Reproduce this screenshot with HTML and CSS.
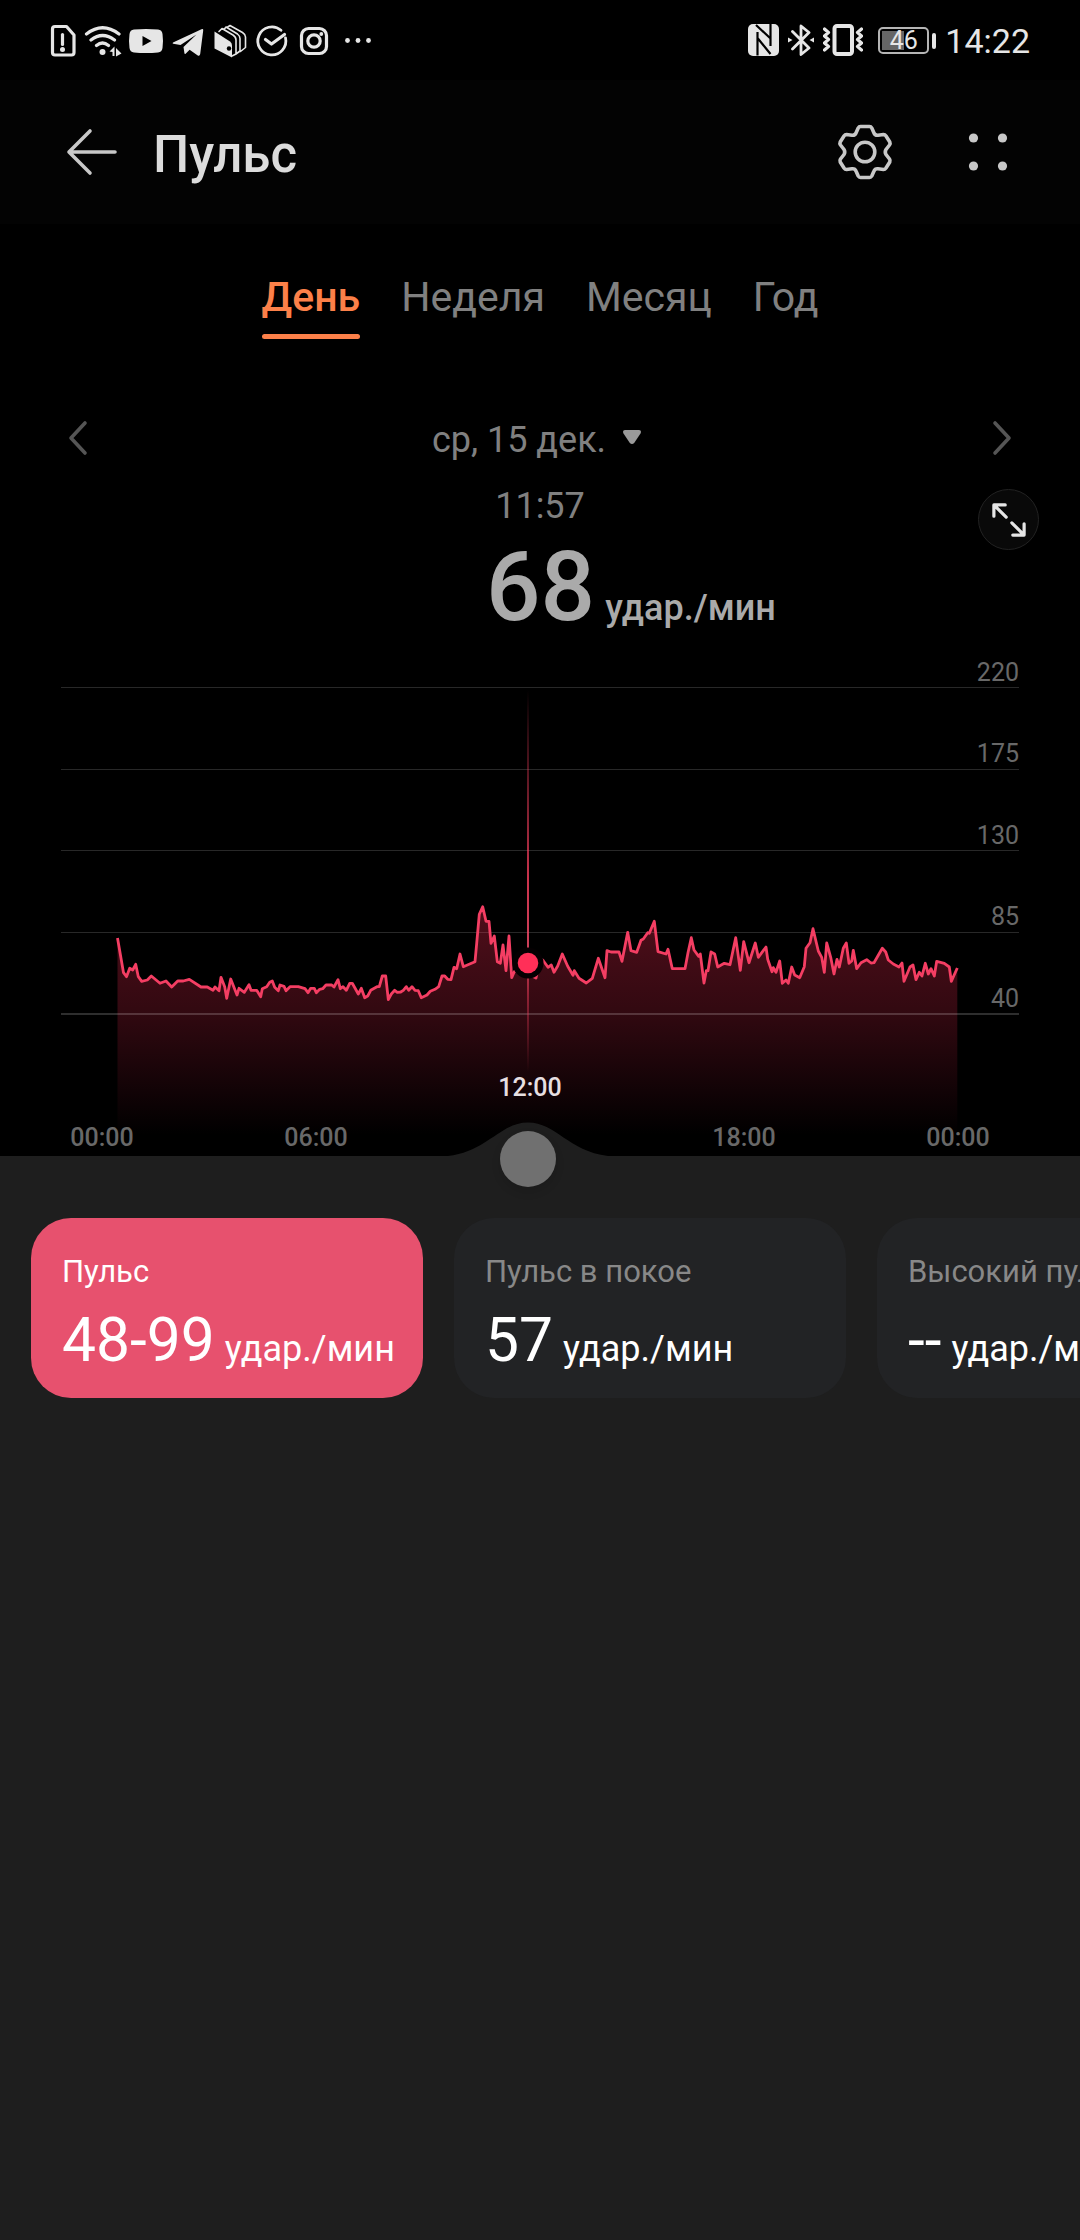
FILE: index.html
```
<!DOCTYPE html>
<html lang="ru">
<head>
    <meta charset="UTF-8">
    <meta name="viewport" content="width=device-width, initial-scale=1.0">
    <title>Пульс</title>
    <link rel="stylesheet" href="styles.css">
</head>
<body>
    <div class="status-bar">
        <div class="status-left">
            <svg viewBox="0 0 42 36" width="42" height="36">
                <path class="line" d="M13 4.5h11.5l7.5 8.500v17.500q0 2.500-2.500 2.500h-16.500q-2.500 0-2.500-2.500v-23.500q0-2.500 2.500-2.500z"/>
                <path class="line" d="M20.500 12.500v10"/>
                <circle cx="20.500" cy="27.500" r="2.500"/>
            </svg>
            <svg viewBox="0 0 42 36" width="42" height="36">
                <path class="line" d="M2.500 12q16-12.500 32.500 0M7 18q11.500-9 23.500 0M12.500 23.500q6-5 12 0"/>
                <circle cx="18.500" cy="30" r="3"/>
                <path d="M25.500 29.500l5-5v9.500h-2v-4zM32 26l5.500 5.500-5.500 3z"/>
            </svg>
            <svg viewBox="0 0 42 36" width="42" height="36">
                <path d="M8 7.500q12-1 24 0 4 .3 4.500 4.500 1 7 0 14-.5 4.200-4.500 4.500-12 1-24 0-4-.3-4.500-4.500-1-7 0-14 .5-4.200 4.500-4.500z"/>
                <path class="cut" d="M16.500 14l9 5-9 5z"/>
            </svg>
            <svg viewBox="0 0 42 36" width="42" height="36">
                <path d="M5 20.500L33.500 7.200q2-.7 1.700 1.300l-3 23.500q-.5 2.800-2.800 1.300l-7.800-5.500-4 4q-1 .9-1.200-.8l-.9-6 13-12.500-16 10.500-7.300-1.300q-1.200-.4-.2-1.200z"/>
            </svg>
            <svg viewBox="0 0 42 36" width="42" height="36">
                <path d="M4.500 9.500L20 19.500q2 1.500 2 4v12l-17.500-9z"/>
                <path class="thin" d="M9 9.500l3-3 11 6.500q3 2 3 5v14l-4 2M14 7.500l2-2.500 11.500 7q2.500 2 2.500 4.500v12.500l-4 3M17 5.500l3-2 12.500 7q3 2 3 4.500v10.500l-5 4"/>
                <circle class="cut" cx="19" cy="26.500" r="2.200"/>
            </svg>
            <svg viewBox="0 0 42 36" width="42" height="36">
                <path class="line2" d="M29 8.300a14 14 0 1 0 4.500 7.500"/>
                <path class="line" d="M13.500 17.500l6 4.500 13-9.500"/>
            </svg>
            <svg viewBox="0 0 42 36" width="42" height="36">
                <rect class="line" x="7.500" y="6.500" width="25" height="25" rx="7"/>
                <circle class="line" cx="20" cy="19" r="6.200"/>
                <circle cx="27.300" cy="12" r="1.900"/>
            </svg>
            <svg viewBox="0 0 42 36" width="42" height="36">
                <circle cx="11.500" cy="18.500" r="2.400"/>
                <circle cx="22" cy="18.500" r="2.400"/>
                <circle cx="32.500" cy="18.500" r="2.400"/>
            </svg>
        </div>
        <div class="status-right">
            <svg viewBox="0 0 31 32" width="31" height="32">
                <rect width="31" height="32" rx="5"/>
                <path class="nfc" d="M8 1l14 13M22.500 0v22M9.500 8v23.500M9.500 14l13 16"/>
            </svg>
            <svg viewBox="0 0 26 32" width="26" height="32">
                <path class="line2" d="M4.500 7.500L21 24l-8 6.500V2l8 6.500L4.500 25"/>
                <path d="M0 13.500l4.500 2.500L0 18.500zM26 13.500L21.500 16l4.500 2.500z"/>
            </svg>
            <svg viewBox="0 0 40 32" width="40" height="32">
                <rect class="line4" x="11.500" y="2" width="17.500" height="28" rx="2.500"/>
                <path class="line" d="M1.500 5l4 3.500-4 3.500 4 3.500-4 3.500 4 3.500-4 3.500M38.500 5l-4 3.500 4 3.500-4 3.500 4 3.500-4 3.500 4 3.500"/>
            </svg>
            <div class="battery"><span>46</span></div>
            <div class="clock">14:22</div>
        </div>
    </div>

    <div class="header">
        <svg class="back" viewBox="0 0 52 48" width="52" height="48">
            <path d="M24 3L3 24l21 21M3 24h46"/>
        </svg>
        <h1>Пульс</h1>
        <svg class="gear" viewBox="-28 -28 56 56" width="56" height="56">
            <path d="M-4.500 -25.500H4.500Q6 -25.500 6.800 -24L9 -19Q10 -16.500 13 -16.800L18.500 -17.500Q20 -17.500 21 -16L24.800 -10Q25.500 -8.500 24.500 -7L21 -2.500Q19.500 0 21 2.500L24.500 7Q25.500 8.500 24.800 10L21 16Q20 17.500 18.500 17.500L13 16.800Q10 16.500 9 19L6.800 24Q6 25.500 4.500 25.500H-4.500Q-6 25.500 -6.800 24L-9 19Q-10 16.500 -13 16.800L-18.500 17.500Q-20 17.500 -21 16L-24.800 10Q-25.500 8.500 -24.500 7L-21 2.500Q-19.500 0 -21 -2.500L-24.500 -7Q-25.500 -8.500 -24.800 -10L-21 -16Q-20 -17.500 -18.500 -17.500L-13 -16.800Q-10 -16.500 -9 -19L-6.800 -24Q-6 -25.500 -4.500 -25.500Z"/>
            <circle r="9.800"/>
        </svg>
        <svg class="more" viewBox="0 0 40 40" width="40" height="40">
            <circle cx="5.500" cy="6" r="4.600"/>
            <circle cx="34.500" cy="6" r="4.600"/>
            <circle cx="5.500" cy="34" r="4.600"/>
            <circle cx="34.500" cy="34" r="4.600"/>
        </svg>
    </div>

    <div class="tabs">
        <div class="tab active">День</div>
        <div class="tab">Неделя</div>
        <div class="tab">Месяц</div>
        <div class="tab">Год</div>
    </div>

    <div class="date-row">
        <svg class="chevron" viewBox="0 0 20 36" width="20" height="36"><path d="M17 3L3 18l14 15"/></svg>
        <div class="date">
            <span>ср, 15 дек.</span>
            <svg viewBox="0 0 20 16" width="20" height="16"><path d="M3 1h14q3 .5 1.500 3.500l-6 9q-2.500 3-5 0l-6-9q-1.500-3 1.500-3.500z"/></svg>
        </div>
        <svg class="chevron" viewBox="0 0 20 36" width="20" height="36"><path d="M3 3l14 15L3 33"/></svg>
    </div>

    <div class="reading">
        <div class="time">11:57</div>
        <div class="bpm"><span class="number">68</span><span class="unit">удар./мин</span></div>
        <div class="expand">
            <svg viewBox="0 0 36 36" width="34" height="34">
                <path d="M2 14V2h12M2.500 2.500L15 15M34 22v12H22M21 21l12.500 12.500"/>
            </svg>
        </div>
    </div>

    <div class="chart">
        <svg viewBox="0 656 1080 500" width="1080" height="500">
            <defs>
                <linearGradient id="fill" gradientUnits="userSpaceOnUse" x1="0" y1="905" x2="0" y2="1135">
                    <stop offset="0" stop-color="#ff2d55" stop-opacity="0.320"/>
                    <stop offset="0.450" stop-color="#ff2d55" stop-opacity="0.200"/>
                    <stop offset="1" stop-color="#ff2d55" stop-opacity="0"/>
                </linearGradient>
                <linearGradient id="cursor" gradientUnits="userSpaceOnUse" x1="0" y1="690" x2="0" y2="1072">
                    <stop offset="0" stop-color="#ff4060" stop-opacity="0"/>
                    <stop offset="0.500" stop-color="#ff4060" stop-opacity="0.800"/>
                    <stop offset="0.680" stop-color="#ff5070" stop-opacity="0.800"/>
                    <stop offset="0.800" stop-color="#ff4060" stop-opacity="0.450"/>
                    <stop offset="1" stop-color="#ff4060" stop-opacity="0"/>
                </linearGradient>
            </defs>
            <path class="grid" d="M61 687.500H1019M61 769.500H1019M61 850.500H1019M61 932.500H1019"/>
            <polygon id="area" fill="url(#fill)"/>
            <path class="grid base" d="M61 1014H1019"/>
            <polyline id="pulse" class="pulse" points="117.5,938 123.5,972.7 126.5,976.7 129.7,968.3 132.7,970 135.7,964.3 138.3,976.7 141.7,981.3 147.3,980 151.3,976 160,983.3 166,981 171.7,987 177.7,981 183.3,981 189.3,979.3 201,987 207.3,987 213,990.3 215,987 219,990.7 221,977.3 224.7,986.7 226.7,998.3 230.7,979 237,995 239,988.3 244.3,992.3 249,984.7 251,990.3 256.7,990.3 260.7,996.7 262.3,988.7 266.7,986.7 269.7,982.3 272.3,981 274.7,987.3 278.3,990.7 280,985 284,986.3 286,990.7 290,986.7 298.3,986.7 305,988.7 308,992.7 310.7,988.3 314.3,988.3 316.3,992.7 319.7,989.3 322.7,988.7
                326,985 331.7,985 334,987 338,979.7 340.3,988.7 343,986.7 346.3,990.3 349.7,983.3 352.3,983.3 358.3,994 361.3,988.3 364.7,997.7 367.7,996 370.7,990.3 377,986.7 379.3,986.7 382.3,976 385.7,976 388.3,999.7 391.3,994 394.7,990.3 397.3,992.3 400.7,992 403.3,990.3 406.3,986.7 408.7,990.3 412,986.7 415,990.3 418.3,990.7 421.3,997.7 427,995 430.3,991.3 435,989.3 438.7,986.7 442,976 444.7,976 447.7,979.3 451,979.7 454,967.3 456.7,968.7 460,954 463.3,966.7 475,961.7 476.7,943.3 479.3,914.3 482.7,906.7 486,921.3 489,921.3 491,943.3 494.3,936 497.3,961.7 500.3,963.3 503,945 506,970.7 509,936 511.7,977.7 514.3,971.7 520,970 536,978 540,958
                543.3,960.7 548,967.3 551.3,965 554,972.3 557.7,966 562.3,954 567.7,966.3 573,975.3 574.3,970.7 579,978.3 586.3,983 592.3,978.3 598.3,958.3 605,977.7 607,950.7 611,952 619,952 622,961.3 627.7,932.3 631,950.7 636.7,952.3 641,940.3 643.3,939 647.7,932.7 649.3,933.3 654.3,921.3 658,951.7 666,954 668,949.3 672.3,968.7 685,968.7 688,952.7 691.3,937.7 694,950 698.7,956.3 700.3,954 704,983 706.3,970.7 708,970.7 711,952 714.7,954 717.7,967 724.3,963.3 730,964.7 735.7,937.7 740.3,970.3 743.7,941.7 749,962.7 755.3,943
                758.3,957.3 766,947 767.7,959.3 772,971.7 773.3,967.7 776,972.3 779.7,961 782.3,983.3 786,980 788.3,983.3 791.7,967 794.7,975 799.7,977.7 804.3,966.7 806,948.3 810,942.7 813,928.7 818.3,951 821.7,957.3 824.3,972.3 826.7,943 830.7,957.3 834,974 837,959.3 839.3,967 843.3,948.3 846.3,943 849,963.3 851.7,961 853.3,950.3 856.7,968.7 861,962.7 866.7,959.7 871,963 874,962.7 882.3,948.3 885.7,952 888.3,960 893.3,964 899,967 902,963 904,981.3 910,967 913,965 916,979.7 919.3,972.3 922,976 925.3,963.3 928.3,974 931,968.7 934.3,976 936.7,961.3 944.3,963.3 949.3,967 951.3,981.3 957.3,968"/>
            <rect x="527" y="690" width="2" height="382" fill="url(#cursor)"/>
            <circle cx="528" cy="963" r="15.500" fill="#050002"/>
            <circle cx="528" cy="963" r="10.300" fill="#ff2f58"/>
            <g class="y-labels">
                <text x="1019" y="681">220</text>
                <text x="1019" y="762">175</text>
                <text x="1019" y="844">130</text>
                <text x="1019" y="925">85</text>
                <text x="1019" y="1007">40</text>
            </g>
            <g class="x-labels">
                <text x="102" y="1146">00:00</text>
                <text x="316" y="1146">06:00</text>
                <text class="current" x="530" y="1096">12:00</text>
                <text x="744" y="1146">18:00</text>
                <text x="958" y="1146">00:00</text>
            </g>
            <path class="bump" d="M448 1156C488 1151 500 1122.500 528 1122.500S568 1151 608 1156z"/>
        </svg>
        <div class="handle"></div>
    </div>

    <div class="sheet">
        <div class="card selected">
            <div class="label">Пульс</div>
            <div class="value">48-99<span>удар./мин</span></div>
        </div>
        <div class="card">
            <div class="label">Пульс в покое</div>
            <div class="value">57<span>удар./мин</span></div>
        </div>
        <div class="card">
            <div class="label">Высокий пульс</div>
            <div class="value">--<span>удар./мин</span></div>
        </div>
    </div>

    <script>
        // close the pulse line down to the axis to get the filled area
        const points = document.getElementById('pulse').getAttribute('points');
        document.getElementById('area').setAttribute('points', points + ' 957.3,1140 117.5,1140');
    </script>
</body>
</html>
```
FILE: styles.css
```
* {
    box-sizing: border-box;
}
body {
    margin: 0;
    width: 1080px;
    height: 2240px;
    display: flex;
    flex-direction: column;
    overflow: hidden;
    background: #000;
    color: #fff;
    font-family: Roboto, 'Noto Sans', sans-serif;
}
svg {
    display: block;
    flex: none;
}
.status-bar {
    display: flex;
    justify-content: space-between;
    height: 80px;
    padding: 0 50px 0 42px;
}
.status-left {
    display: flex;
    padding-top: 22px;
}
.status-right {
    display: flex;
    align-items: center;
    height: 80px;
}
.status-bar svg {
    fill: #e6e6e6;
}
.status-bar .line,
.status-bar .line2,
.status-bar .line4,
.status-bar .thin {
    fill: none;
    stroke: #e6e6e6;
    stroke-width: 3.2;
    stroke-linecap: round;
    stroke-linejoin: round;
}
.status-bar .line2 {
    stroke-width: 2.8;
}
.status-bar .line4 {
    stroke-width: 4;
}
.status-bar .thin {
    stroke-width: 1.6;
}
.status-bar .cut {
    fill: #000;
}
.status-bar .nfc {
    fill: none;
    stroke: #000;
    stroke-width: 2.2;
}
.status-right svg {
    margin-right: 9px;
}
.battery {
    position: relative;
    width: 51px;
    height: 27px;
    margin: 1px 16px 0 6px;
    border: 2px solid #b5b5b5;
    border-radius: 5px;
    background: linear-gradient(90deg, #666 22px, transparent 22px) 2px 2px / 47px 19px no-repeat;
    font-size: 25px;
    line-height: 23px;
    text-align: center;
    color: #e6e6e6;
}
.battery::after {
    content: '';
    position: absolute;
    right: -9px;
    top: 4px;
    width: 4px;
    height: 16px;
    border-radius: 2px;
    background: #e6e6e6;
}
.clock {
    font-size: 34px;
    line-height: 40px;
    padding-top: 2px;
    color: #e6e6e6;
}
.header {
    display: flex;
    align-items: center;
    height: 144px;
    padding: 0 72px 0 66px;
    background: #030303;
}
.header svg {
    fill: none;
    stroke: #c8c8c8;
    stroke-width: 3.6;
    stroke-linecap: round;
    stroke-linejoin: round;
}
.header h1 {
    flex: 1;
    margin: 5px 0 0 35px;
    font-size: 51px;
    font-weight: 500;
    line-height: 60px;
    color: #dcdcdc;
}
.header .more {
    margin-left: 75px;
    fill: #c8c8c8;
    stroke: none;
}
.tabs {
    display: flex;
    justify-content: center;
    gap: 41px;
    height: 156px;
    padding-top: 49px;
    font-size: 41px;
    line-height: 48px;
    color: #808080;
}
.tab {
    height: 66px;
}
.tab.active {
    position: relative;
    font-weight: 500;
    color: #fc8049;
}
.tab.active::after {
    content: '';
    position: absolute;
    left: 0;
    right: 0;
    bottom: 0;
    height: 5px;
    border-radius: 3px;
    background: #fc8049;
}
.date-row {
    display: flex;
    justify-content: space-between;
    align-items: center;
    height: 116px;
    padding: 0 68px;
}
.chevron {
    fill: none;
    stroke: #555;
    stroke-width: 3.6;
    stroke-linecap: round;
    stroke-linejoin: round;
}
.date {
    display: flex;
    align-items: center;
    gap: 16px;
    padding: 3px 6px 0 0;
    font-size: 36px;
    line-height: 44px;
    color: #808080;
}
.date svg {
    margin-bottom: 5px;
    fill: #9a9a9a;
}
.reading {
    position: relative;
    height: 160px;
}
.time {
    text-align: center;
    font-size: 36px;
    line-height: 20px;
    color: #808080;
}
.bpm {
    display: flex;
    align-items: baseline;
    gap: 10px;
    padding: 1px 0 0 486px;
    font-weight: 500;
    line-height: 140px;
    color: #aaa;
}
.bpm .number {
    font-size: 96px;
}
.bpm .unit {
    font-size: 36px;
}
.expand {
    position: absolute;
    right: 41px;
    top: -7px;
    display: flex;
    align-items: center;
    justify-content: center;
    width: 61px;
    height: 61px;
    border: 1px solid #222;
    border-radius: 50%;
    background: #090909;
}
.expand path {
    fill: none;
    stroke: #e6e6e6;
    stroke-width: 3.4;
    stroke-linecap: round;
    stroke-linejoin: round;
}
.chart {
    position: relative;
    height: 500px;
}
.grid {
    stroke: #282828;
    stroke-width: 1;
}
.grid.base {
    stroke: rgba(255, 255, 255, 0.18);
    stroke-width: 2;
}
.pulse {
    fill: none;
    stroke: #f43e63;
    stroke-width: 2.8;
    stroke-linejoin: round;
}
.y-labels text,
.x-labels text {
    font-size: 25px;
    fill: #686868;
}
.y-labels text {
    text-anchor: end;
}
.x-labels text {
    text-anchor: middle;
    font-weight: 500;
}
.x-labels .current {
    fill: #e6dfe1;
}
.bump {
    fill: #1e1e1e;
}
.handle {
    position: absolute;
    left: 500px;
    bottom: -31px;
    width: 56px;
    height: 56px;
    border-radius: 50%;
    background: #707070;
    box-shadow: 0 5px 10px rgba(0, 0, 0, 0.12);
}
.sheet {
    flex: 1;
    display: flex;
    align-items: flex-start;
    gap: 31px;
    padding: 62px 0 0 31px;
    overflow: hidden;
    background: #1e1e1e;
}
.card {
    flex: none;
    width: 392px;
    height: 180px;
    padding: 35px 0 0 31px;
    border-radius: 40px;
    background: #222325;
    white-space: nowrap;
}
.card.selected {
    background: #e7516e;
}
.label {
    font-size: 31px;
    line-height: 38px;
    color: #888;
}
.card.selected .label {
    color: #fff;
}
.value {
    padding-top: 7px;
    font-size: 60.5px;
    line-height: 86px;
}
.value span {
    margin-left: 10px;
    font-size: 36px;
}
```
